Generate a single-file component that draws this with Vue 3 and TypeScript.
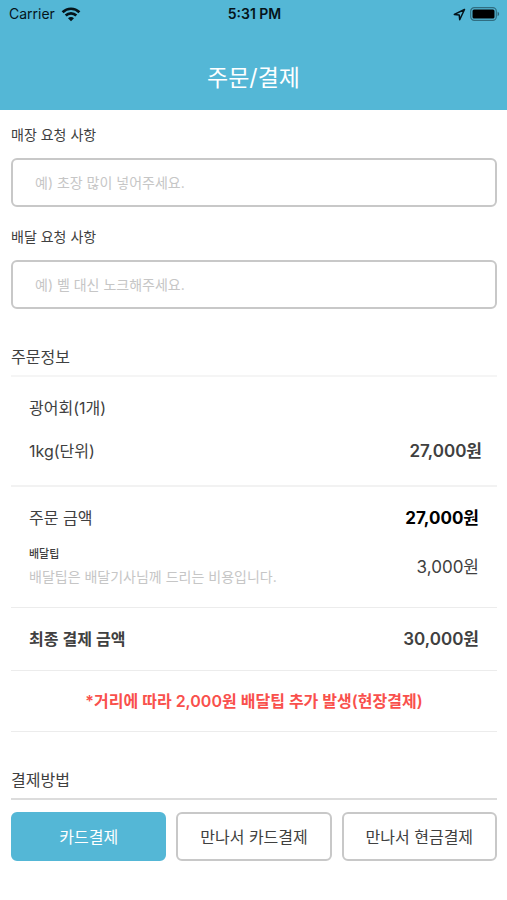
<script setup lang="ts">
import { ref } from 'vue'

interface RequestField {
  id: string
  label: string
  placeholder: string
  value: string
}

const requests = ref<RequestField[]>([
  { id: 'store-request', label: '매장 요청 사항', placeholder: '예) 초장 많이 넣어주세요.', value: '' },
  { id: 'delivery-request', label: '배달 요청 사항', placeholder: '예) 벨 대신 노크해주세요.', value: '' },
])

const methods = ['카드결제', '만나서 카드결제', '만나서 현금결제']
const selected = ref(methods[0])

const orderPrice = 27000
const deliveryTip = 3000

const won = (amount: number): string => `${amount.toLocaleString('en-US')}원`
</script>

<template>
  <div class="page">
    <header class="header">
      <div class="status">
        <div class="carrier">
          <span>Carrier</span>
          <svg width="20" height="15" viewBox="0 0 20 15" fill="none" stroke="#05141a" stroke-width="2.7">
            <path d="M1.6 5.2a12 12 0 0 1 16.8 0" />
            <path d="M4.7 8.5a7.5 7.5 0 0 1 10.6 0" />
            <path d="M10 14.2 7 11.2a4.2 4.2 0 0 1 6 0z" fill="#05141a" stroke="none" />
          </svg>
        </div>
        <span class="time">5:31 PM</span>
        <div class="indicators">
          <svg width="13" height="13" viewBox="0 0 13 13" fill="none" stroke="#05141a" stroke-width="1.5" stroke-linejoin="round">
            <path d="M11.5 1.5 1.3 6.4l4.9.5.5 4.8z" />
          </svg>
          <svg width="30" height="14" viewBox="0 0 30 14">
            <rect x="0.7" y="0.7" width="25.6" height="12.6" rx="3.6" fill="none" stroke="#05141a" stroke-opacity="0.45" stroke-width="1.2" />
            <rect x="2.5" y="2.5" width="22" height="9" rx="1.5" fill="#000" />
            <path d="M27.6 4.8c2 .7 2 3.7 0 4.4z" fill="#05141a" fill-opacity="0.5" />
          </svg>
        </div>
      </div>
      <h1>주문/결제</h1>
    </header>

    <main>
      <form class="requests" @submit.prevent>
        <div v-for="field in requests" :key="field.id" class="field">
          <label :for="field.id">{{ field.label }}</label>
          <input :id="field.id" v-model="field.value" type="text" :placeholder="field.placeholder" />
        </div>
      </form>

      <section>
        <h2 class="light">주문정보</h2>
        <div class="block item">
          <div class="row"><span>광어회(1개)</span></div>
          <div class="row">
            <span>1kg(단위)</span>
            <strong class="amount">{{ won(orderPrice) }}</strong>
          </div>
        </div>
        <div class="block price">
          <div class="row">
            <span>주문 금액</span>
            <strong class="amount dark">{{ won(orderPrice) }}</strong>
          </div>
          <div class="row">
            <div class="tip">
              <span class="tip-name">배달팁</span>
              <span class="tip-note">배달팁은 배달기사님께 드리는 비용입니다.</span>
            </div>
            <span class="amount">{{ won(deliveryTip) }}</span>
          </div>
        </div>
        <div class="block total">
          <div class="row">
            <strong>최종 결제 금액</strong>
            <strong class="amount">{{ won(orderPrice + deliveryTip) }}</strong>
          </div>
        </div>
        <p class="notice">*거리에 따라 2,000원 배달팁 추가 발생(현장결제)</p>
      </section>

      <section>
        <h2>결제방법</h2>
        <div class="methods">
          <button
            v-for="method in methods"
            :key="method"
            type="button"
            :class="{ active: method === selected }"
            :aria-pressed="method === selected"
            @click="selected = method"
          >
            {{ method }}
          </button>
        </div>
      </section>
    </main>
  </div>
</template>

<style>
body {
  background: #fff;
}
</style>

<style scoped>
.page {
  font-family: Inter, "Noto Sans CJK KR", sans-serif;
  font-size: 16px;
  line-height: 24px;
  color: #404040;
}

.header {
  background: #54b7d6;
  padding-bottom: 8px;
}

.status {
  display: grid;
  grid-template-columns: 1fr auto 1fr;
  align-items: center;
  height: 28px;
  padding: 0 7px 0 9px;
  font-size: 14px;
  color: #05141a;
}

.carrier,
.indicators {
  display: flex;
  align-items: center;
  gap: 6px;
}

.indicators {
  justify-content: flex-end;
  gap: 4px;
}

.time {
  font-weight: 600;
}

h1 {
  margin: 26px 0 0;
  font-size: 23px;
  font-weight: 400;
  line-height: 48px;
  text-align: center;
  color: #fff;
}

main {
  padding: 14px 10px 24px 11px;
}

.requests {
  display: flex;
  flex-direction: column;
  gap: 19px;
}

.field {
  display: flex;
  flex-direction: column;
  gap: 12px;
}

label {
  font-size: 14px;
  line-height: 22px;
}

input {
  box-sizing: border-box;
  width: 100%;
  height: 49px;
  padding: 0 22px;
  border: 2px solid #c8c8c8;
  border-radius: 6px;
  background: #fff;
  font: inherit;
  font-size: 14px;
  color: #404040;
}

input::placeholder {
  color: #c6c6c6;
  opacity: 1;
}

h2 {
  margin: 36px 0 0;
  padding-bottom: 6px;
  border-bottom: 2px solid #dcdcdc;
  font-size: 16px;
  font-weight: 400;
}

h2.light {
  border-bottom-color: #f5f5f5;
}

.block {
  display: flex;
  flex-direction: column;
  padding: 19px 18px;
  border-bottom: 1px solid #ececec;
}

.item {
  gap: 19px;
  padding-right: 15px;
  padding-bottom: 22px;
  border-bottom: 2px solid #f2f2f2;
}

.price {
  gap: 15px;
}

.row {
  display: flex;
  align-items: center;
  justify-content: space-between;
}

strong {
  font-weight: 600;
}

.amount {
  font-size: 17px;
}

.dark {
  font-weight: 700;
  color: #000;
}

.tip {
  display: flex;
  flex-direction: column;
  gap: 3px;
}

.tip-name {
  font-size: 11px;
  font-weight: 500;
  line-height: 18px;
}

.tip-note {
  font-size: 14px;
  line-height: 22px;
  color: #c6c6c6;
}

.notice {
  margin: 0;
  padding: 18px 0;
  border-bottom: 1px solid #ececec;
  font-weight: 600;
  text-align: center;
  color: #f9504c;
}

.methods {
  display: grid;
  grid-template-columns: repeat(3, 1fr);
  gap: 10px;
  margin-top: 12px;
}

button {
  height: 49px;
  padding: 0;
  border: 2px solid #c8c8c8;
  border-radius: 6px;
  background: #fff;
  font: inherit;
  color: #404040;
  cursor: pointer;
}

button.active {
  border-color: #54b7d6;
  background: #54b7d6;
  color: #fff;
}
</style>
